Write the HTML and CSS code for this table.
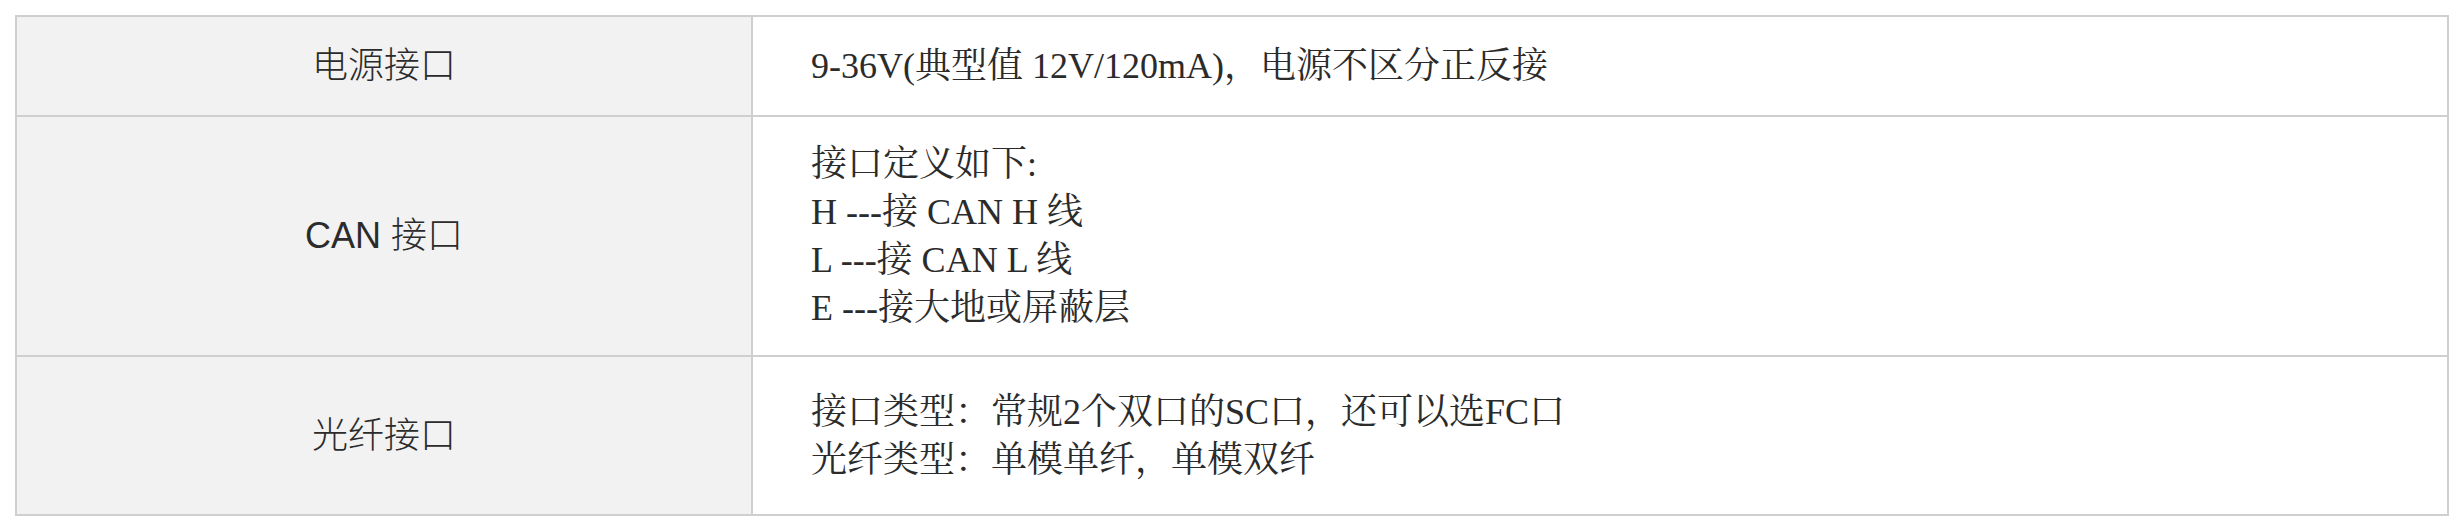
FILE: index.html
```html
<!DOCTYPE html>
<html lang="zh-CN">
<head>
<meta charset="utf-8">
<title>接口说明</title>
<link rel="stylesheet" href="styles.css">
</head>
<body>
<table class="spec">
  <tbody>
    <tr class="row-power">
      <td class="label">电源接口</td>
      <td class="value">9-36V(典型值 12V/120mA)，电源不区分正反接</td>
    </tr>
    <tr class="row-can">
      <td class="label">CAN 接口</td>
      <td class="value">
        <div>接口定义如下:</div>
        <div>H ---接 CAN H 线</div>
        <div>L ---接 CAN L 线</div>
        <div>E ---接大地或屏蔽层</div>
      </td>
    </tr>
    <tr class="row-fiber">
      <td class="label">光纤接口</td>
      <td class="value">
        <div>接口类型：常规2个双口的SC口，还可以选FC口</div>
        <div>光纤类型：单模单纤，单模双纤</div>
      </td>
    </tr>
  </tbody>
</table>
</body>
</html>
```

FILE: styles.css
```css
html, body {
  margin: 0;
  padding: 0;
  background: #ffffff;
}

.spec {
  margin: 15px;
  width: 2434px;
  border-collapse: separate;
  border-spacing: 0;
  border-top: 2px solid #cfcfcf;
  border-left: 2px solid #cfcfcf;
  table-layout: fixed;
}

.spec td {
  border-right: 2px solid #cfcfcf;
  border-bottom: 2px solid #cfcfcf;
  padding: 0;
  vertical-align: middle;
  color: #2b2b2b;
  font-size: 36px;
  line-height: 48px;
}

.spec td.label {
  width: 734px;
  background: #f2f2f2;
  text-align: center;
  font-family: "Liberation Sans", "Noto Sans CJK SC", sans-serif;
  font-weight: 300;
}

.spec td.value {
  background: #ffffff;
  padding-left: 58px;
  font-family: "Liberation Serif", "Noto Serif CJK SC", "Noto Sans CJK SC", serif;
}

.row-power td { height: 98px; }
.row-can td { height: 238px; }
.row-fiber td { height: 157px; }
```
